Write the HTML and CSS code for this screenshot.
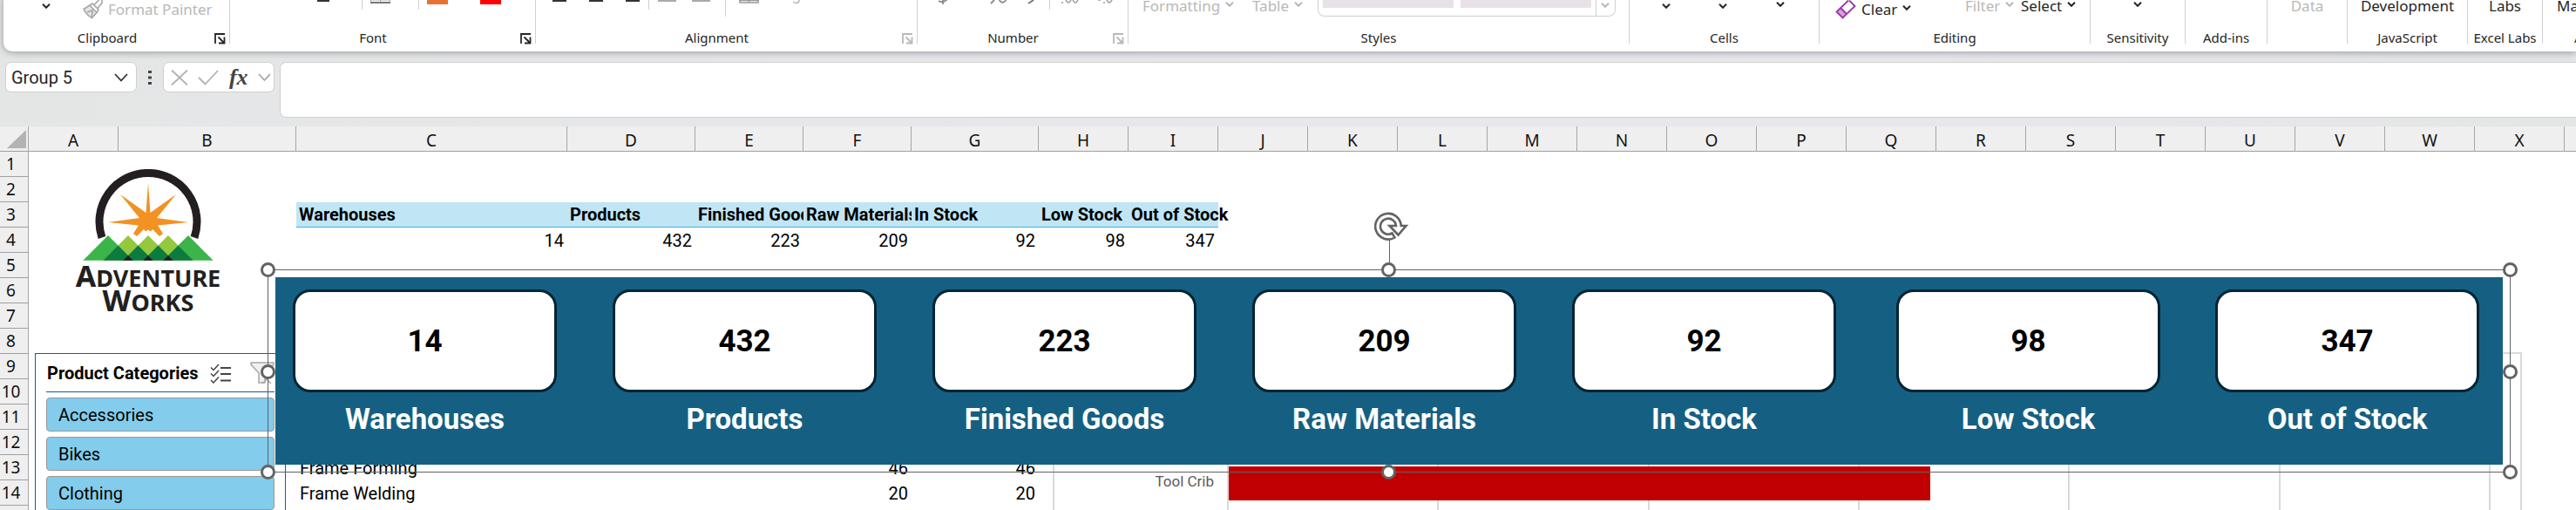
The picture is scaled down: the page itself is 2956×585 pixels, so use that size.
FILE: index.html
```html
<!DOCTYPE html>
<html lang="en">
<head>
<meta charset="utf-8">
<title>Inventory workbook</title>
<link rel="stylesheet" href="styles.css">
</head>
<body>
<svg class="defs" aria-hidden="true">
  <symbol id="chev" viewBox="0 0 10 6"><path d="M1 .8 5 4.8 9 .8" fill="none" stroke="currentColor" stroke-width="2"/></symbol>
  <symbol id="launch" viewBox="0 0 13 13"><path d="M1 12V1H12M4.500 4.500 10.500 10.500M11.500 4.500V11.500H5" fill="none" stroke="currentColor" stroke-width="1.800"/></symbol>
</svg>

<header class="ribbon">
  <section class="group clipboard">
    <div class="tools">
      <button class="tool low" aria-label="Paste options"><svg class="chev down"><use href="#chev"/></svg></button>
      <button class="tool low off"><svg width="23" height="22" viewBox="0 0 23 22"><path d="M1 10.500 8 6 16 14.500 10.500 20.500Q4 17 1 10.500Z" fill="#e4e4e4" stroke="#a6a6a6" stroke-width="1.600"/><path d="M8 6 11 4 18 11 16 14.500M13 5.500 18.500 0M17 9.500 22 3.500V0M5 14 11 12 10.500 20" fill="none" stroke="#a6a6a6" stroke-width="1.600"/></svg>Format Painter</button>
    </div>
    <div class="caption launchable">Clipboard<button class="launcher" aria-label="Clipboard settings"><svg width="13" height="13"><use href="#launch"/></svg></button></div>
  </section>
  <section class="group font">
    <div class="tools">
      <button class="tool low" aria-label="Underline"><svg width="14" height="4"><path d="M0 1H14" stroke="#333" stroke-width="2"/></svg></button>
      <i class="rule"></i>
      <button class="tool low" aria-label="Borders"><svg width="23" height="5"><path d="M0 0H23M11.500 0V2M.5 0V3M22.500 0V3" stroke="#aaa"/><path d="M0 3H23" stroke="#777" stroke-width="2"/></svg></button>
      <i class="rule"></i>
      <button class="tool low" aria-label="Fill color"><svg width="24" height="5"><path d="M0 0H24V5H0Z" fill="#e97132"/></svg></button>
      <button class="tool low" aria-label="Font color"><svg width="24" height="5"><path d="M0 0H24V5H0Z" fill="#f00"/></svg></button>
    </div>
    <div class="caption launchable">Font<button class="launcher" aria-label="Font settings"><svg width="13" height="13"><use href="#launch"/></svg></button></div>
  </section>
  <section class="group alignment">
    <div class="tools">
      <button class="tool low" aria-label="Align left"><svg width="16" height="4"><path d="M0 1H16" stroke="#333" stroke-width="2"/></svg></button>
      <button class="tool low" aria-label="Center"><svg width="16" height="4"><path d="M0 1H16" stroke="#333" stroke-width="2"/></svg></button>
      <button class="tool low" aria-label="Align right"><svg width="16" height="4"><path d="M0 1H16" stroke="#333" stroke-width="2"/></svg></button>
      <i class="rule"></i>
      <button class="tool low" aria-label="Decrease indent"><svg width="21" height="4"><path d="M0 1H21" stroke="#aaa" stroke-width="2"/></svg></button>
      <button class="tool low" aria-label="Increase indent"><svg width="21" height="4"><path d="M0 1H21" stroke="#aaa" stroke-width="2"/></svg></button>
      <i class="rule long"></i>
      <button class="tool low" aria-label="Merge cells"><svg width="23" height="5"><path d="M1 0V3H22V0M11.500 0V3M0 .5H23" fill="none" stroke="#999" stroke-width="1.500"/></svg></button>
      <button class="tool low" aria-label="Merge and center"><svg width="8" height="5"><path d="M0 2.500Q7 5 7 0" fill="none" stroke="#bbb" stroke-width="1.600"/></svg></button>
    </div>
    <div class="caption launchable">Alignment<button class="launcher off" aria-label="Alignment settings"><svg width="13" height="13"><use href="#launch"/></svg></button></div>
  </section>
  <section class="group number">
    <div class="tools">
      <button class="tool low" aria-label="Currency"><svg width="12" height="6"><path d="M1 1Q5 3.500 10.500 0M6 0V5" fill="none" stroke="#888" stroke-width="1.800"/></svg></button>
      <button class="tool low" aria-label="Percent"><svg width="20" height="5"><path d="M1 4 5 0M10.500 0Q14.500 5.500 18.500 0" fill="none" stroke="#888" stroke-width="1.800"/></svg></button>
      <button class="tool low" aria-label="Comma"><svg width="9" height="5"><path d="M1 4 7 0" stroke="#777" stroke-width="2"/></svg></button>
      <i class="rule"></i>
      <button class="tool low" aria-label="Increase decimal"><svg width="20" height="5"><path d="M0 3H2M5 0Q8 6 11 0M13 0Q16 6 19 0" fill="none" stroke="#999" stroke-width="1.500"/></svg></button>
      <button class="tool low" aria-label="Decrease decimal"><svg width="20" height="5"><path d="M0 0H3M6 3H8M10 0Q13 6 16 0" fill="none" stroke="#999" stroke-width="1.500"/></svg></button>
    </div>
    <div class="caption launchable">Number<button class="launcher off" aria-label="Number settings"><svg width="13" height="13"><use href="#launch"/></svg></button></div>
  </section>
  <section class="group styles">
    <div class="tools">
      <button class="tool off">Formatting<svg class="chev"><use href="#chev"/></svg></button>
      <button class="tool off">Table<svg class="chev"><use href="#chev"/></svg></button>
      <div class="gallery"><span class="swatch"></span><span class="swatch"></span><button class="more off" aria-label="More styles"><svg class="chev"><use href="#chev"/></svg></button></div>
    </div>
    <div class="caption">Styles</div>
  </section>
  <section class="group cells">
    <div class="tools">
      <button class="tool low" aria-label="Insert"><svg class="chev down"><use href="#chev"/></svg></button>
      <button class="tool low" aria-label="Delete"><svg class="chev down"><use href="#chev"/></svg></button>
      <button class="tool" aria-label="Format"><svg class="chev down"><use href="#chev"/></svg></button>
    </div>
    <div class="caption">Cells</div>
  </section>
  <section class="group editing">
    <div class="tools">
      <button class="tool low"><svg width="24" height="22" viewBox="0 0 24 22"><path d="M1.500 13.500 6 8.500 13 15.500 8.500 20.500Z" fill="#d9a0dc"/><path d="M15 .5 1.500 13.500 8.500 20.500 22.500 7 16 .5M6 9 13 16" fill="none" stroke="#9a34a3" stroke-width="1.800"/></svg>Clear<svg class="chev"><use href="#chev"/></svg></button>
      <button class="tool off">Filter<svg class="chev"><use href="#chev"/></svg></button>
      <button class="tool">Select<svg class="chev"><use href="#chev"/></svg></button>
    </div>
    <div class="caption">Editing</div>
  </section>
  <section class="group sensitivity">
    <div class="tools centered"><button class="tool" aria-label="Sensitivity"><svg class="chev down"><use href="#chev"/></svg></button></div>
    <div class="caption">Sensitivity</div>
  </section>
  <section class="group addins"><div class="tools"></div><div class="caption">Add-ins</div></section>
  <section class="group data"><div class="tools centered"><button class="tool off">Data</button></div></section>
  <section class="group script"><div class="tools centered"><button class="tool">Development</button></div><div class="caption">JavaScript</div></section>
  <section class="group labs"><div class="tools centered"><button class="tool">Labs</button></div><div class="caption">Excel Labs</div></section>
  <section class="group last"><div class="tools"><button class="tool">Ma</button></div><div class="caption">A</div></section>
</header>

<div class="formula-row">
  <div class="namebox">
    <input type="text" value="Group 5" aria-label="Name box">
    <button aria-label="Show names"><svg width="16" height="10" viewBox="0 0 16 10"><path d="M1 1 8 8.500 15 1" fill="none" stroke="#333" stroke-width="1.800"/></svg></button>
  </div>
  <svg class="grip" width="4" height="16"><path d="M0 0H4V3H0ZM0 6.500H4V9.500H0ZM0 13H4V16H0Z" fill="#444"/></svg>
  <div class="fx">
    <button aria-label="Cancel"><svg width="20" height="18" viewBox="0 0 20 18"><path d="M1 .5 19 17.500M19 .5 1 17.500" stroke="#b0b0b0" stroke-width="1.800"/></svg></button>
    <button aria-label="Enter"><svg width="24" height="18" viewBox="0 0 24 18"><path d="M1 9 8.500 16.500 23 1" fill="none" stroke="#b0b0b0" stroke-width="1.800"/></svg></button>
    <button class="fn" aria-label="Insert function">fx</button>
    <button aria-label="Function list"><svg width="15" height="9" viewBox="0 0 15 9"><path d="M1 1 7.500 8 14 1" fill="none" stroke="#a0a0a0" stroke-width="1.600"/></svg></button>
  </div>
  <input class="formula" type="text" aria-label="Formula bar">
</div>

<main class="sheet">
  <table class="grid">
    <colgroup><col class="w-head"><col class="w-a"><col class="w-b"><col class="w-c"><col class="w-d"><col class="w-e"><col class="w-e"><col class="w-g"><col class="w-a" span="18"></colgroup>
    <thead>
      <tr><th class="corner"><svg width="22" height="21" viewBox="0 0 22 21"><path d="M22 0V21H0Z" fill="#b3b3b3"/></svg></th><th>A</th><th>B</th><th>C</th><th>D</th><th>E</th><th>F</th><th>G</th><th>H</th><th>I</th><th>J</th><th>K</th><th>L</th><th>M</th><th>N</th><th>O</th><th>P</th><th>Q</th><th>R</th><th>S</th><th>T</th><th>U</th><th>V</th><th>W</th><th>X</th><th></th></tr>
    </thead>
    <tbody>
      <tr><th>1</th><td colspan="25"></td></tr>
      <tr><th>2</th><td colspan="25"></td></tr>
      <tr class="heads"><th>3</th><td colspan="2"></td><td class="h">Warehouses</td><td class="h">Products</td><td class="h">Finished Goods</td><td class="h">Raw Materials</td><td class="h">In Stock</td><td class="h">Low Stock</td><td class="h spill">Out of Stock</td><td colspan="16"></td></tr>
      <tr><th>4</th><td colspan="2"></td><td>14</td><td>432</td><td>223</td><td>209</td><td>92</td><td>98</td><td>347</td><td colspan="16"></td></tr>
      <tr><th>5</th><td colspan="25"></td></tr>
      <tr><th>6</th><td colspan="25"></td></tr>
      <tr><th>7</th><td colspan="25"></td></tr>
      <tr><th>8</th><td colspan="25"></td></tr>
      <tr><th>9</th><td colspan="25"></td></tr>
      <tr><th>10</th><td colspan="25"></td></tr>
      <tr><th>11</th><td colspan="25"></td></tr>
      <tr><th>12</th><td colspan="25"></td></tr>
      <tr><th>13</th><td colspan="2"></td><td class="text">Frame Forming</td><td></td><td></td><td>46</td><td>46</td><td colspan="18"></td></tr>
      <tr><th>14</th><td colspan="2"></td><td class="text">Frame Welding</td><td></td><td></td><td>20</td><td>20</td><td colspan="18"></td></tr>
      <tr><th></th><td colspan="25"></td></tr>
    </tbody>
  </table>

  <svg class="logo" viewBox="83 194 176 168" role="img" aria-label="Adventure Works">
    <path d="M117 272.500A56 56 0 1 1 223 272.500" fill="none" stroke="#231f20" stroke-width="9"/>
    <path d="M170 210 172.500 244 202 223 180 250 216 255 181 258.500 187 268 183 271 175 263 173 265.500 170 263.500 167 265.500 165 263 157 271 153 268 159 258.500 124 255 160 250 138 223 167.500 244Z" fill="#f29222"/>
    <path d="M95.300 298.700 124 270 152.700 298.700ZM187.300 298.700 216 270 244.700 298.700Z" fill="#3bb44a"/>
    <path d="M147 270 175.700 298.700H118.300ZM170 270 198.700 298.700H141.300ZM193 270 221.700 298.700H164.300Z" fill="#94c93d"/>
    <path d="M118.300 298.700 135.500 281.500 147 293 158.500 281.500 170 293 181.500 281.500 193 293 204.500 281.500 221.700 298.700Z" fill="#0c7b3f"/>
    <path d="M141.300 298.700 147 293 152.700 298.700ZM164.300 298.700 170 293 175.700 298.700ZM187.300 298.700 193 293 198.700 298.700Z" fill="#231f20"/>
    <text x="170" y="329" text-anchor="middle" class="brand"><tspan class="cap">A</tspan>DVENTURE</text>
    <text x="170" y="357" text-anchor="middle" class="brand"><tspan class="cap">W</tspan>ORKS</text>
  </svg>

  <section class="slicer">
    <header>
      <h2>Product Categories</h2>
      <button aria-label="Multi-select"><svg width="24" height="24" viewBox="0 0 24 24"><path d="M12 6H24M12 13H24M12 20.500H24" stroke="#444" stroke-width="1.800"/><path d="M1 5.500 4 8.500 10 2M1 12.500 4 15.500 10 9M1 20 4 23 10 16.500" fill="none" stroke="#444" stroke-width="1.500"/></svg></button>
      <button aria-label="Clear filter"><svg width="28" height="26" viewBox="0 0 28 26"><path d="M1 1H27V3L17 13V24H10V13L1 3Z" fill="#f0f0f0" stroke="#a6a6a6" stroke-width="1.500"/><path d="M14 15 24 25M24 15 14 25" stroke="#a6a6a6" stroke-width="1.500"/></svg></button>
    </header>
    <button class="item">Accessories</button>
    <button class="item">Bikes</button>
    <button class="item">Clothing</button>
  </section>

  <section class="chart">
    <span class="category">Tool Crib</span>
    <div class="plot"><i></i><i></i><i></i><i></i><i></i><i></i><div class="bar" style="width:55.6%"></div></div>
  </section>

  <section class="band">
    <div class="kpi"><div class="card">14</div><h3>Warehouses</h3></div>
    <div class="kpi"><div class="card">432</div><h3>Products</h3></div>
    <div class="kpi"><div class="card">223</div><h3>Finished Goods</h3></div>
    <div class="kpi"><div class="card">209</div><h3>Raw Materials</h3></div>
    <div class="kpi"><div class="card">92</div><h3>In Stock</h3></div>
    <div class="kpi"><div class="card">98</div><h3>Low Stock</h3></div>
    <div class="kpi"><div class="card">347</div><h3>Out of Stock</h3></div>
  </section>

  <div class="selection">
    <i class="stem"></i>
    <svg class="rotate" width="40" height="34" viewBox="0 0 40 34"><path d="M30.800 16A14.800 14.800 0 1 0 23.500 29.500L20.500 24.500A9 9 0 1 1 25 16H17.500L27.500 26.500 36.500 16Z" fill="#fff" stroke="#636363" stroke-width="2.600"/></svg>
    <i class="knob l t"></i><i class="knob c t"></i><i class="knob r t"></i>
    <i class="knob l m"></i><i class="knob r m"></i>
    <i class="knob l b"></i><i class="knob c b"></i><i class="knob r b"></i>
  </div>
</main>
</body>
</html>
```

FILE: styles.css
```css
* { box-sizing: border-box; }
body {
  margin: 0;
  height: 100vh;
  overflow: hidden;
  display: flex;
  flex-direction: column;
  background: linear-gradient(90deg, #e4e6e6, #e8e7ec 50%, #e8e7ec 75%, #e3e5e6);
  font-family: "Noto Sans", "Open Sans", sans-serif;
  color: #262626;
}
button, input { font: inherit; color: inherit; border: 0; background: none; padding: 0; margin: 0; }
svg { display: block; flex: none; }
.defs { position: absolute; width: 0; height: 0; }

/* Ribbon */
.ribbon {
  flex: none;
  display: flex;
  height: 63px;
  margin: -4px 0 0 4px;
  padding-left: 1px;
  background: #fff;
  border-radius: 0 0 0 10px;
  box-shadow: 0 1px 8px rgba(0, 0, 0, .35);
}
.group { flex: none; height: 54px; border-right: 1px solid #d0d0d0; }
.tools { display: grid; justify-items: start; align-items: start; height: 37px; overflow: hidden; }
.centered { justify-items: center; }
.tool { display: flex; align-items: center; gap: 6px; font-size: 17px; line-height: 22px; white-space: nowrap; }
.low { margin-top: 4px; }
.off, .launcher.off { color: #b8b8b8; }
.chev { width: 10px; height: 6px; }
.tool .chev { margin-bottom: 4px; }
.tool .chev.down { margin: 4px 0 0; }
.tools .tool:not(.low) .chev.down { margin-top: 6px; }
.rule { width: 1px; height: 15px; background: #d0d0d0; }
.rule.long { height: 23px; }
.caption { position: relative; height: 17px; font-size: 15px; line-height: 20px; text-align: center; white-space: nowrap; }
.launchable { padding-right: 22px; }
.launcher { position: absolute; right: 4px; top: 5px; }

.clipboard { width: 259px; }
.clipboard .tools { padding-left: 43px; grid-template-columns: 47px auto; }
.font { width: 351px; }
.font .tools { padding-left: 100px; grid-template-columns: 51px 10px 55px 10px 61px auto; }
.alignment { width: 438px; }
.alignment .tools { padding-left: 19px; grid-template-columns: 42px 42px 26px 11px 39px 38px 16px 62px auto; }
.number { width: 242px; }
.number .tools { padding-left: 23px; grid-template-columns: 60px 43px 25px 14px 42px auto; }
.styles { width: 575px; }
.styles .tools { padding-left: 16px; grid-template-columns: 126px 75px auto; }
.cells { width: 218px; }
.cells .tools { padding-left: 37px; grid-template-columns: 65px 66px auto; }
.editing { width: 311px; }
.editing .tools { padding-left: 18px; grid-template-columns: 149px 64px auto; }
.sensitivity { width: 109px; }
.addins { width: 94px; }
.data { width: 92px; }
.script { width: 138px; }
.labs { width: 86px; }
.last { width: 38px; overflow: hidden; border: 0; }
.last .tools { padding-left: 16px; }
.last .caption { padding-left: 36px; text-align: left; }

.gallery {
  display: flex;
  gap: 8px;
  height: 23px;
  padding-left: 5px;
  border: 1px solid #d0d0d0;
  border-top: 0;
  border-radius: 0 0 8px 8px;
}
.swatch { width: 150px; height: 13px; background: #e8e2e8; }
.more { width: 22px; margin-left: -3px; padding: 7px 0 0 5px; border-left: 1px solid #d0d0d0; display: flex; align-items: flex-start; }

/* Formula bar */
.formula-row { flex: none; display: flex; align-items: flex-start; margin: 12px 0 10px 6px; height: 64px; }
.namebox, .fx, .formula { background: #fff; border: 1px solid #d0d0d0; border-radius: 7px; }
.namebox { display: flex; align-items: center; width: 151px; height: 35px; padding: 0 9px 0 6px; }
.namebox input { flex: 1; min-width: 0; font: 20px/24px Roboto, sans-serif; }
.grip { margin: 10px 13px 0; }
.fx { display: flex; align-items: center; justify-content: space-between; width: 128px; height: 35px; padding: 0 3px 0 8px; }
.fn { font: italic 700 26px/30px "Liberation Serif", serif; color: #444; }
.formula { flex: 1; min-width: 0; height: 64px; margin-left: 6px; border-radius: 7px 0 0 7px; border-right: 0; padding: 0 12px; }

/* Worksheet */
.sheet { position: relative; flex: 1; min-height: 0; overflow: hidden; background: #fff; }
.grid { table-layout: fixed; width: 3046px; border-collapse: separate; border-spacing: 0; }
.w-head { width: 33px; }
.w-a { width: 103px; }
.w-b { width: 204px; }
.w-c { width: 311px; }
.w-d { width: 147px; }
.w-e { width: 124px; }
.w-g { width: 146px; }
.grid th {
  height: 29px;
  padding: 0;
  background: #efefef;
  border-right: 1px solid #a6a6a6;
  border-bottom: 1px solid #a0a0a0;
  font-size: 19px;
  font-weight: 400;
  line-height: 24px;
  color: #111;
}
.grid thead th { padding-top: 4px; }
.grid thead .corner { padding-top: 0; }
.grid tbody th { padding-right: 7px; }
.corner svg { margin-left: 8px; }
.grid td {
  padding: 0 4px;
  font-family: Roboto, sans-serif;
  font-size: 20px;
  line-height: 24px;
  color: #000;
  text-align: right;
  white-space: nowrap;
  overflow: hidden;
}
.grid td.text { text-align: left; }
.grid td.h { padding-left: 3px; padding-right: 0; text-align: left; font-weight: 700; background: #c0e6f5; border-bottom: 1px solid #45b0e1; }
.grid td.spill { overflow: visible; }

.logo { position: absolute; left: 83px; top: 49px; width: 176px; height: 168px; }
.brand { font-family: "Noto Sans", sans-serif; font-weight: 700; font-size: 27px; fill: #231f20; }
.brand .cap { font-size: 34px; }

/* Category slicer */
.slicer {
  position: absolute;
  left: 40px;
  top: 260px;
  width: 288px;
  height: 240px;
  padding: 0 12px;
  border: 1px solid #156082;
  background: #fff;
  display: flex;
  flex-direction: column;
  gap: 6px;
  font-family: Roboto, sans-serif;
  font-size: 20px;
  color: #000;
}
.slicer header { display: flex; align-items: center; height: 44px; padding-left: 1px; border-bottom: 1px solid #156082; }
.slicer h2 { margin: 0 auto 0 0; font-size: 20px; line-height: 24px; }
.slicer header button + button { margin-left: 22px; }
.item { flex: none; height: 39px; padding-left: 13px; text-align: left; background: #83cceb; border: 1px solid #999; border-radius: 4px; }

/* Tool chart */
.chart { position: absolute; left: 1208px; right: 62px; top: 259px; height: 240px; border: 2px solid #d9d9d9; display: flex; padding-right: 34px; }
.category { width: 198px; padding: 136px 15px 0 0; font: 17px/20px Roboto, sans-serif; color: #595959; text-align: right; }
.plot { position: relative; flex: 1; display: flex; border-left: 2px solid #d9d9d9; }
.plot i { flex: 1; border-right: 2px solid #d9d9d9; }
.bar { position: absolute; left: 0; top: 129px; height: 39px; background: #c00000; }

/* Summary band */
.band {
  position: absolute;
  left: 316px;
  right: 84px;
  top: 173px;
  height: 215px;
  padding: 14px 27px 0 20px;
  display: grid;
  grid-template-columns: 367fr 367fr 367fr 367fr 372fr 366fr 303fr;
  background: #156082;
  font-family: Roboto, sans-serif;
}
.kpi { width: 303px; text-align: center; }
.card {
  display: flex;
  align-items: center;
  justify-content: center;
  height: 118px;
  background: #fff;
  border: 3px solid #042433;
  border-radius: 20px;
  font-size: 35px;
  font-weight: 700;
  color: #000;
}
.kpi h3 { margin: 11px 0 0; font-size: 33px; line-height: 40px; font-weight: 700; color: #fff; white-space: nowrap; }

/* Selection frame with handles */
.selection { position: absolute; left: 307px; right: 75px; top: 164px; height: 233px; border: 1px solid #636363; }
.knob { position: absolute; width: 17px; height: 17px; border: 3px solid #636363; border-radius: 50%; background: #fff; }
.l { left: -9px; }
.r { right: -9px; }
.c { left: calc(50% - 9px); }
.t { top: -9px; }
.m { top: calc(50% - 8px); }
.b { bottom: -9px; }
.stem { position: absolute; left: 50%; top: -36px; width: 1px; height: 30px; background: #636363; }
.rotate { position: absolute; left: calc(50% - 17px); top: -67px; }
```
